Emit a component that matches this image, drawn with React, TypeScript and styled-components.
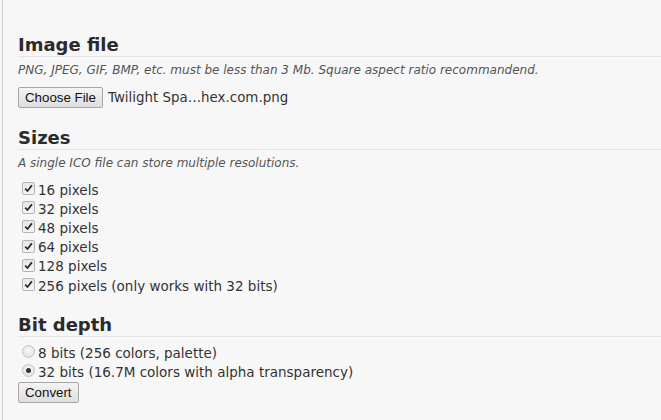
import React from "react";
import styled, { createGlobalStyle } from "styled-components";

const Global = createGlobalStyle`
  html, body { margin: 0; padding: 0; background: #f7f7f7; }
  body { font-family: Verdana, "DejaVu Sans", sans-serif; color: #333; }
`;

const Page = styled.div`
  margin-left: 2px;
  border-left: 1px solid #d2d2d2;
  min-height: 420px;
  padding: 34px 0 0 15px;
  box-sizing: border-box;
`;

const Section = styled.section`
  margin-bottom: 19px;
`;

const Heading = styled.h2`
  margin: 0;
  font-family: "DejaVu Sans", Verdana, sans-serif;
  font-weight: bold;
  font-size: 18px;
  line-height: 22px;
  color: #2b2b2b;
  border-bottom: 1px solid #e6e6e6;
`;

const Note = styled.p`
  margin: 4px 0 8px;
  font-family: "DejaVu Sans", Verdana, sans-serif;
  font-style: italic;
  font-size: 12px;
  line-height: 18px;
  color: #555;
`;

const FileRow = styled.div`
  display: flex;
  align-items: center;
  gap: 5px;
`;

const Button = styled.button`
  font-family: Arial, "Liberation Sans", sans-serif;
  font-size: 13.3px;
  color: #111;
  height: 21px;
  padding: 0 6px;
  border: 1px solid #a6a6a6;
  border-radius: 2px;
  background: linear-gradient(#f4f4f4, #dedede);
  margin: 0;
`;

const FileName = styled.span`
  font-family: "DejaVu Sans", Verdana, sans-serif;
  font-size: 13.4px;
  color: #333;
`;

const List = styled.div<{ $top?: number }>`
  display: flex;
  flex-direction: column;
  padding-left: 4px;
  margin-top: ${(p) => p.$top ?? 0}px;
`;

const Option = styled.label`
  display: flex;
  align-items: center;
  gap: 3px;
  height: 19.2px;
  font-family: "DejaVu Sans", Verdana, sans-serif;
  font-size: 13.5px;
  color: #333;
`;

const Box = styled.span`
  width: 11px;
  height: 11px;
  border: 1px solid #b4b4b4;
  border-radius: 2px;
  background: linear-gradient(#e6e6e6, #f6f6f6);
  display: inline-flex;
  align-items: center;
  justify-content: center;
  margin-top: -2px;
`;

const Radio = styled.span<{ $on?: boolean }>`
  width: 11px;
  height: 11px;
  border: 1px solid #c2c2c2;
  border-radius: 50%;
  background: radial-gradient(circle at 50% 40%, #fafafa, #dcdcdc);
  display: inline-flex;
  align-items: center;
  justify-content: center;
  margin-top: -2px;
  &::after {
    content: "";
    display: ${(p) => (p.$on ? "block" : "none")};
    width: 5px;
    height: 5px;
    border-radius: 50%;
    background: #333;
  }
`;

const ConvertRow = styled.div`
  margin-top: 0;
`;

const Check = () => (
  <Box>
    <svg width="9" height="9" viewBox="0 0 9 9">
      <path d="M1.2 4.6 L3.5 7 L7.9 1.4" fill="none" stroke="#2a2a2a" strokeWidth="1.8" />
    </svg>
  </Box>
);

const sizes = ["16 pixels", "32 pixels", "48 pixels", "64 pixels", "128 pixels", "256 pixels (only works with 32 bits)"];

export default function App() {
  return (
    <>
      <Global />
      <Page>
        <Section>
          <Heading>Image file</Heading>
          <Note>PNG, JPEG, GIF, BMP, etc. must be less than 3 Mb. Square aspect ratio recommandend.</Note>
          <FileRow>
            <Button>Choose File</Button>
            <FileName>Twilight Spa…hex.com.png</FileName>
          </FileRow>
        </Section>
        <Section>
          <Heading>Sizes</Heading>
          <Note>A single ICO file can store multiple resolutions.</Note>
          <List>
            {sizes.map((s) => (
              <Option key={s}>
                <Check />
                {s}
              </Option>
            ))}
          </List>
        </Section>
        <Section>
          <Heading>Bit depth</Heading>
          <List $top={6}>
            <Option>
              <Radio />
              8 bits (256 colors, palette)
            </Option>
            <Option>
              <Radio $on />
              32 bits (16.7M colors with alpha transparency)
            </Option>
          </List>
          <ConvertRow>
            <Button>Convert</Button>
          </ConvertRow>
        </Section>
      </Page>
    </>
  );
}
